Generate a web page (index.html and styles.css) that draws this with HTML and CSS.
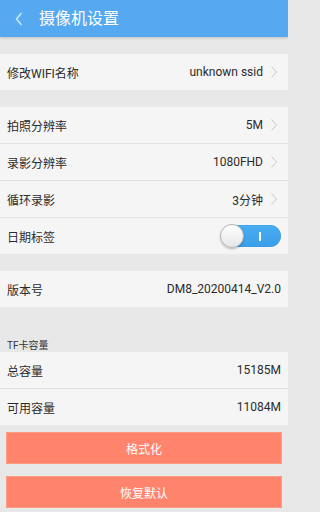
FILE: index.html
```html
<!DOCTYPE html>
<html>
<head>
<meta charset="utf-8">
<link rel="stylesheet" href="styles.css">
</head>
<body>
<div class="header">
  <svg class="back" width="8" height="14" viewBox="0 0 8 14"><path d="M6.5 1 L1.5 7 L6.5 13" fill="none" stroke="rgba(255,255,255,0.7)" stroke-width="1.6"/></svg>
  <span class="title">摄像机设置</span>
</div>
<div class="content">
  <div class="section s1">
    <div class="row"><span class="label">修改WIFI名称</span><span class="val">unknown ssid</span><svg class="chev" width="10" height="12" viewBox="0 0 10 12"><path d="M0.5 0.5 L5.5 6 L0.5 11.5" fill="none" stroke="#c9c9c9" stroke-width="1"/></svg></div>
  </div>
  <div class="section s2">
    <div class="row"><span class="label">拍照分辨率</span><span class="val">5M</span><svg class="chev" width="10" height="12" viewBox="0 0 10 12"><path d="M0.5 0.5 L5.5 6 L0.5 11.5" fill="none" stroke="#c9c9c9" stroke-width="1"/></svg></div>
    <div class="row"><span class="label">录影分辨率</span><span class="val">1080FHD</span><svg class="chev" width="10" height="12" viewBox="0 0 10 12"><path d="M0.5 0.5 L5.5 6 L0.5 11.5" fill="none" stroke="#c9c9c9" stroke-width="1"/></svg></div>
    <div class="row"><span class="label">循环录影</span><span class="val">3分钟</span><svg class="chev" width="10" height="12" viewBox="0 0 10 12"><path d="M0.5 0.5 L5.5 6 L0.5 11.5" fill="none" stroke="#c9c9c9" stroke-width="1"/></svg></div>
    <div class="row"><span class="label">日期标签</span><span class="toggle"><span class="knob"></span><span class="bar"></span></span></div>
  </div>
  <div class="section s3">
    <div class="row"><span class="label">版本号</span><span class="val end">DM8_20200414_V2.0</span></div>
  </div>
  <div class="caption">TF卡容量</div>
  <div class="section s4">
    <div class="row"><span class="label">总容量</span><span class="val end">15185M</span></div>
    <div class="row"><span class="label">可用容量</span><span class="val end">11084M</span></div>
  </div>
  <div class="buttons">
    <div class="btn">格式化</div>
    <div class="btn">恢复默认</div>
  </div>
</div>
</body>
</html>
```

FILE: styles.css
```css
html {
  margin: 0;
  padding: 0;
  background: #e8e8e8;
}
body {
  margin: 0;
  padding: 0;
  width: 288px;
  height: 512px;
  overflow: hidden;
  background: #e8e8e8;
  font-family: Roboto, "Noto Sans CJK SC", sans-serif;
  color: #2b2b2b;
}
.header {
  height: 37px;
  background: #55a9f0;
  display: flex;
  align-items: center;
  box-shadow: 0 1px 3px rgba(0,0,0,0.18);
  position: relative;
  z-index: 1;
}
.back {
  margin-left: 15px;
}
.title {
  margin-left: 16px;
  color: #fff;
  font-size: 16px;
  line-height: 20px;
}
.content {
  display: flex;
  flex-direction: column;
}
.section {
  background: #f5f5f5;
}
.s1 { margin-top: 17px; }
.s2 { margin-top: 17px; }
.s3 { margin-top: 17px; }
.row {
  height: 36px;
  display: flex;
  align-items: center;
  padding: 0 7px;
  font-size: 12px;
}
.row + .row {
  border-top: 1px solid #e3e3e3;
}
.label {
  flex: 1;
}
.chev {
  margin-left: 8px;
}
.caption {
  height: 45px;
  box-sizing: border-box;
  padding: 33px 0 0 7px;
  font-size: 10px;
  line-height: 12px;
  color: #333;
}
.toggle {
  position: relative;
  width: 60px;
  height: 22px;
  border-radius: 11px;
  background: linear-gradient(#48adf2, #3a9fe8);
  box-shadow: inset 0 0 1px rgba(0,0,0,0.2);
}
.knob {
  position: absolute;
  left: -1px;
  top: -1px;
  width: 22px;
  height: 22px;
  border-radius: 50%;
  background: linear-gradient(#ffffff, #e6e6e6);
  border: 1px solid #b5b5b5;
  box-shadow: 0 1px 2px rgba(0,0,0,0.25);
}
.bar {
  position: absolute;
  left: 38px;
  top: 7px;
  width: 2px;
  height: 9px;
  background: #fff;
}
.buttons {
  display: flex;
  flex-direction: column;
  gap: 12px;
  padding: 7px 6px 0;
}
.btn {
  height: 32px;
  box-sizing: border-box;
  background: #ff846b;
  border: 1px solid #ff9c86;
  color: #fff;
  font-size: 12px;
  display: flex;
  align-items: center;
  justify-content: center;
}
```
